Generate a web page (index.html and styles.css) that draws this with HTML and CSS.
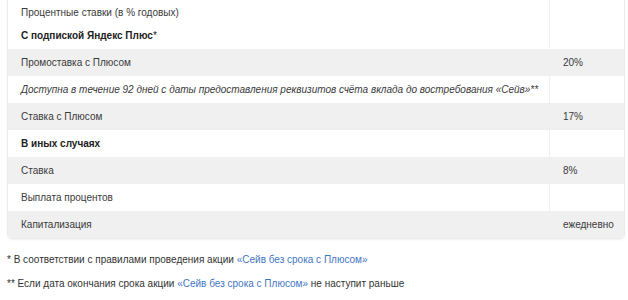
FILE: index.html
```
<!DOCTYPE html>
<html lang="ru">
<head>
<meta charset="utf-8">
<link rel="stylesheet" href="styles.css">
</head>
<body>
<div class="rates">
  <div class="row row-head"><div class="c1">Процентные ставки (в % годовых)</div><div class="c2"></div></div>
  <div class="row"><div class="c1 bold">С подпиской Яндекс Плюс<span class="ast">*</span></div><div class="c2"></div></div>
  <div class="row gray"><div class="c1">Промоставка с Плюсом</div><div class="c2">20%</div></div>
  <div class="row"><div class="c1 ital">Доступна в течение 92 дней с даты предоставления реквизитов счёта вклада до востребования «Сейв»**</div><div class="c2"></div></div>
  <div class="row gray"><div class="c1">Ставка с Плюсом</div><div class="c2">17%</div></div>
  <div class="row"><div class="c1 bold">В иных случаях</div><div class="c2"></div></div>
  <div class="row gray"><div class="c1">Ставка</div><div class="c2">8%</div></div>
  <div class="row"><div class="c1">Выплата процентов</div><div class="c2"></div></div>
  <div class="row gray last"><div class="c1">Капитализация</div><div class="c2">ежедневно</div></div>
</div>
<div class="notes">
  <p>* В соответствии с правилами проведения акции <a href="#">«Сейв без срока с Плюсом»</a></p>
  <p>** Если дата окончания срока акции <a href="#">«Сейв без срока с Плюсом»</a> не наступит раньше</p>
</div>
</body>
</html>
```
FILE: styles.css
```
html, body {
  margin: 0;
  padding: 0;
  background: #fff;
}
body {
  font-family: "Liberation Sans", Arial, sans-serif;
  font-size: 10px;
  color: #3a3a3a;
  padding: 0 3px 0 7px;
}
.rates {
  border: 1px solid #ececec;
  border-top: none;
  border-radius: 0 0 5px 5px;
  box-shadow: 0 1px 2px rgba(0,0,0,0.06);
  overflow: hidden;
}
.row {
  display: grid;
  grid-template-columns: 541px 1fr;
  height: 27px;
  align-items: stretch;
}
.row > div {
  display: flex;
  align-items: center;
}
.row-head {
  height: 22px;
}
.row-head > div {
  padding-top: 3px;
}
.c1 {
  padding-left: 13px;
  white-space: nowrap;
}
.c2 {
  padding-left: 13px;
  border-left: 1px solid #efefef;
}
.gray {
  background: #f0f0f0;
}
.gray .c2 {
  border-left-color: #f0f0f0;
}
.bold {
  font-weight: bold;
  color: #222;
}
.ast {
  font-weight: normal;
}
.ital {
  font-style: italic;
}
.notes {
  padding-top: 14px;
}
.notes p {
  margin: 0 0 11px 0;
  height: 13px;
  line-height: 13px;
  color: #333;
}
.notes a {
  color: #3f76c4;
  text-decoration: none;
}
```
